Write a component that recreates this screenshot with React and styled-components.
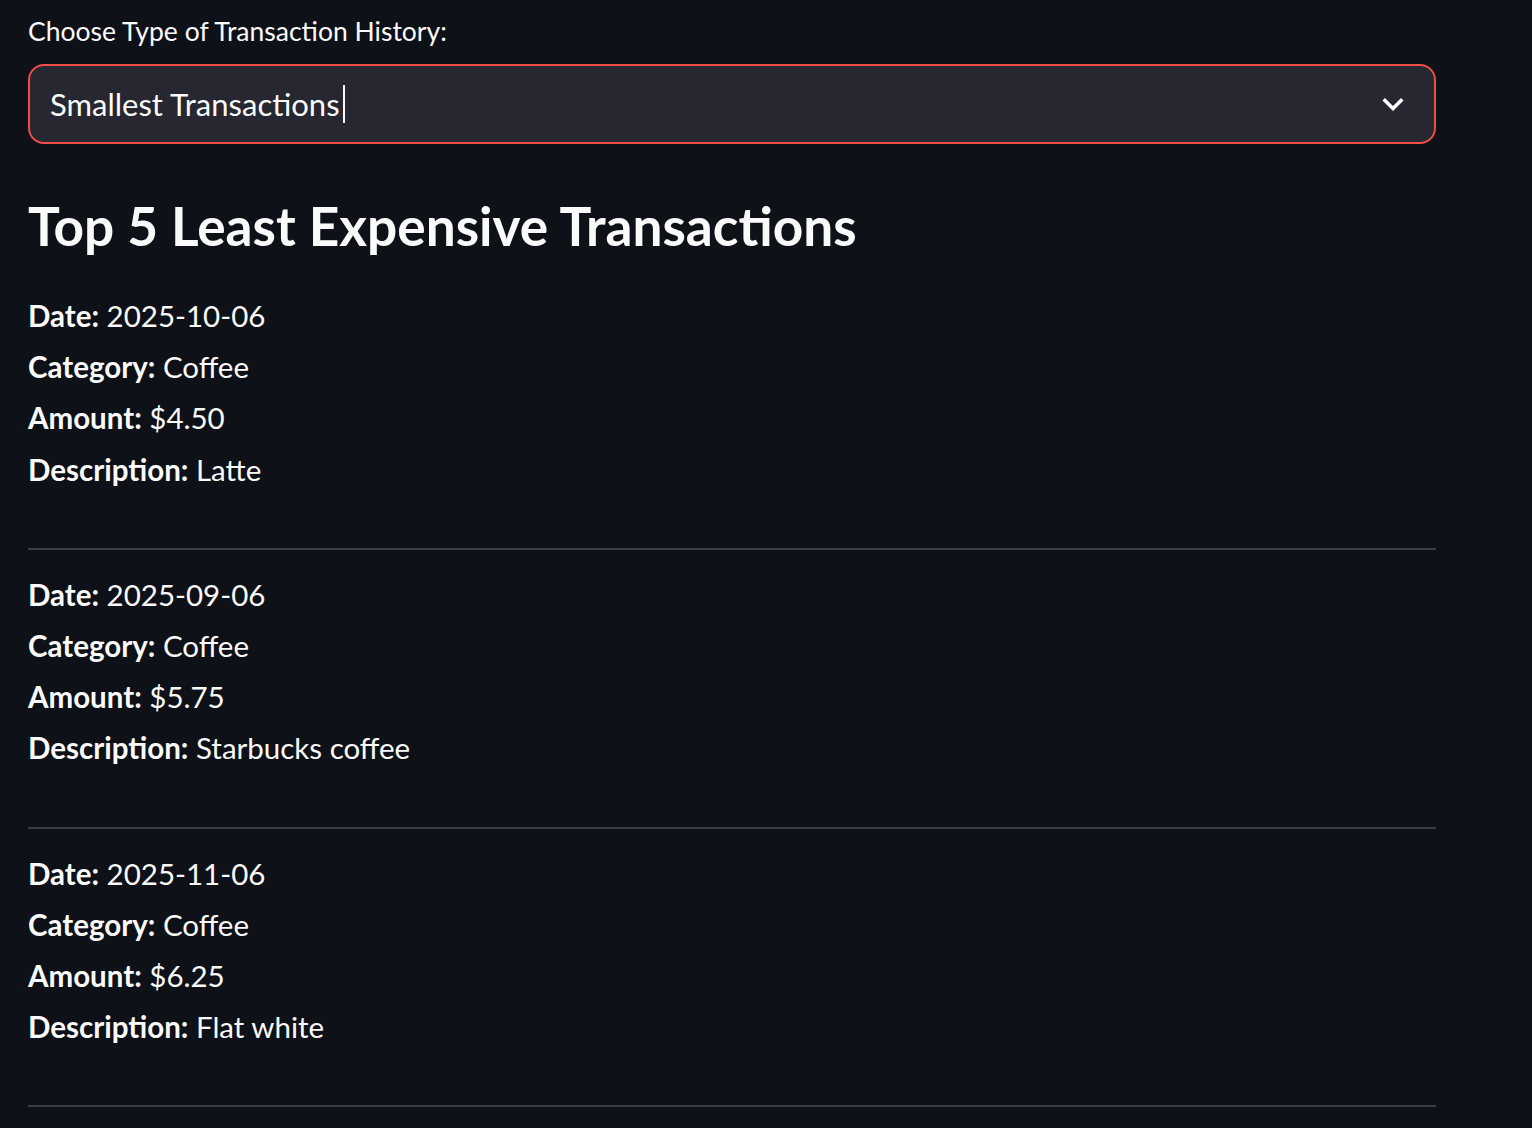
import React from 'react';
import styled, { createGlobalStyle } from 'styled-components';

const GlobalStyle = createGlobalStyle`
  html, body {
    margin: 0;
    padding: 0;
    background: #0e1117;
  }
  body {
    font-family: Lato, "Noto Sans", sans-serif;
    color: #fafafa;
  }
`;

const Main = styled.main`
  width: 1408px;
  padding: 10px 0 0 28px;
`;

const Label = styled.label`
  display: block;
  font-size: 26.5px;
  line-height: 42px;
  color: #fafafa;
`;

const Select = styled.div`
  box-sizing: border-box;
  margin-top: 12px;
  height: 80px;
  display: flex;
  align-items: center;
  justify-content: space-between;
  padding: 0 20px 0 20px;
  background: #262730;
  border: 2px solid #f04d49;
  border-radius: 16px;
`;

const Value = styled.span`
  display: flex;
  align-items: center;
  font-size: 31px;
  color: #fafafa;
`;

const Caret = styled.span`
  display: inline-block;
  width: 2px;
  height: 38px;
  margin-left: 3px;
  background: #fafafa;
`;

const Heading = styled.h3`
  margin: 50px 0 0;
  font-size: 53.2px;
  line-height: 62px;
  font-weight: 700;
  color: #fafafa;
`;

const List = styled.div`
  margin-top: 34px;
`;

const Entry = styled.div`
  font-size: 29.5px;
  line-height: 51.2px;
`;

const Line = styled.p`
  margin: 0;
  strong {
    font-weight: 700;
  }
`;

const Divider = styled.hr`
  margin: 53px 0 19px;
  border: none;
  height: 2px;
  background: #3b3d44;
`;

const Chevron = () => (
  <svg width="42" height="42" viewBox="0 0 24 24" fill="#fafafa">
    <path d="M7.41 8.59L12 13.17l4.59-4.58L18 10l-6 6-6-6 1.41-1.41z" />
  </svg>
);

const transactions = [
  { date: '2025-10-06', category: 'Coffee', amount: '$4.50', description: 'Latte' },
  { date: '2025-09-06', category: 'Coffee', amount: '$5.75', description: 'Starbucks coffee' },
  { date: '2025-11-06', category: 'Coffee', amount: '$6.25', description: 'Flat white' },
];

const App = () => {
  return (
    <>
      <GlobalStyle />
      <Main>
        <Label>Choose Type of Transaction History:</Label>
        <Select>
          <Value>
            Smallest Transactions
            <Caret />
          </Value>
          <Chevron />
        </Select>

        <Heading>Top 5 Least Expensive Transactions</Heading>

        <List>
          {transactions.map((t) => (
            <div key={t.date}>
              <Entry>
                <Line><strong>Date:</strong> {t.date}</Line>
                <Line><strong>Category:</strong> {t.category}</Line>
                <Line><strong>Amount:</strong> {t.amount}</Line>
                <Line><strong>Description:</strong> {t.description}</Line>
              </Entry>
              <Divider />
            </div>
          ))}
        </List>
      </Main>
    </>
  );
};

export default App;
